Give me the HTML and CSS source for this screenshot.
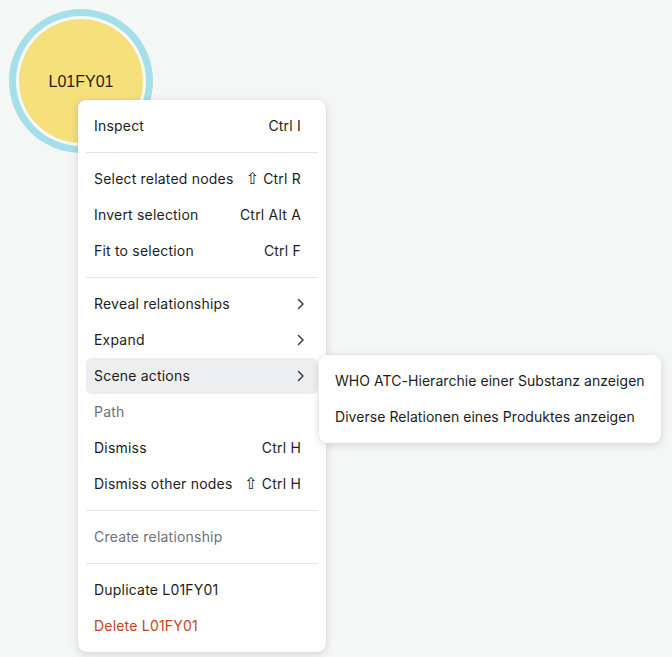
FILE: index.html
```html
<!DOCTYPE html>
<html>
<head>
<meta charset="utf-8">
<link rel="stylesheet" href="styles.css">
</head>
<body>
<div class="canvas">
  <div class="node">
    <div class="node-inner">L01FY01</div>
  </div>
  <div class="menu">
    <div class="item"><span>Inspect</span><span class="kbd">Ctrl I</span></div>
    <div class="sep"></div>
    <div class="item"><span>Select related nodes</span><span class="kbd"><span class="shift">⇧</span> Ctrl R</span></div>
    <div class="item"><span>Invert selection</span><span class="kbd">Ctrl Alt A</span></div>
    <div class="item"><span>Fit to selection</span><span class="kbd">Ctrl F</span></div>
    <div class="sep"></div>
    <div class="item"><span>Reveal relationships</span><svg class="chev" width="8" height="12" viewBox="0 0 8 12"><path d="M1.5 1.5 L6 6 L1.5 10.5" fill="none" stroke="#3a3d42" stroke-width="1.5" stroke-linecap="round" stroke-linejoin="round"/></svg></div>
    <div class="item"><span>Expand</span><svg class="chev" width="8" height="12" viewBox="0 0 8 12"><path d="M1.5 1.5 L6 6 L1.5 10.5" fill="none" stroke="#3a3d42" stroke-width="1.5" stroke-linecap="round" stroke-linejoin="round"/></svg></div>
    <div class="item active"><span>Scene actions</span><svg class="chev" width="8" height="12" viewBox="0 0 8 12"><path d="M1.5 1.5 L6 6 L1.5 10.5" fill="none" stroke="#3a3d42" stroke-width="1.5" stroke-linecap="round" stroke-linejoin="round"/></svg>
      <div class="submenu">
        <div class="subitem">WHO ATC-Hierarchie einer Substanz anzeigen</div>
        <div class="subitem">Diverse Relationen eines Produktes anzeigen</div>
      </div>
    </div>
    <div class="item disabled"><span>Path</span></div>
    <div class="item"><span>Dismiss</span><span class="kbd">Ctrl H</span></div>
    <div class="item"><span>Dismiss other nodes</span><span class="kbd"><span class="shift">⇧</span> Ctrl H</span></div>
    <div class="sep"></div>
    <div class="item disabled"><span>Create relationship</span></div>
    <div class="sep"></div>
    <div class="item"><span>Duplicate L01FY01</span></div>
    <div class="item danger"><span>Delete L01FY01</span></div>
  </div>
</div>
</body>
</html>
```
FILE: styles.css
```css
html, body {
  margin: 0;
  padding: 0;
  background: #f5f6f6;
}
body {
  width: 672px;
  height: 657px;
  overflow: hidden;
  font-family: Inter, "Noto Sans", sans-serif;
}
.canvas {
  position: relative;
  width: 672px;
  height: 657px;
}
.node {
  position: absolute;
  left: 9px;
  top: 9px;
  width: 144px;
  height: 144px;
  border-radius: 50%;
  background: #a4e0e7;
  display: flex;
  align-items: center;
  justify-content: center;
}
.node-inner {
  width: 124px;
  height: 124px;
  border-radius: 50%;
  background: #f6e07b;
  box-shadow: 0 0 0 3px #f7f9f8;
  display: flex;
  align-items: center;
  justify-content: center;
  font-family: "Liberation Sans", Arial, sans-serif;
  font-size: 16px;
  color: #1f1f1f;
  padding-top: 2px;
  box-sizing: border-box;
}
.menu {
  position: absolute;
  left: 78px;
  top: 100px;
  width: 248px;
  box-sizing: border-box;
  padding: 8px;
  background: #ffffff;
  border-radius: 8px;
  box-shadow: 0 2px 8px rgba(0, 0, 0, 0.14), 0 0 1px rgba(0, 0, 0, 0.12);
}
.item {
  position: relative;
  height: 36px;
  box-sizing: border-box;
  padding: 0 17px 1px 8px;
  display: flex;
  align-items: center;
  justify-content: space-between;
  font-size: 14px;
  color: #1c1d20;
  border-radius: 6px;
  letter-spacing: 0.2px;
}
.item.active {
  background: #edeef0;
}
.item.disabled {
  color: #6d7177;
}
.item.danger {
  color: #c2461c;
}
.kbd {
  color: #1c1d20;
}
.shift {
  font-family: "DejaVu Sans", sans-serif;
  font-size: 16px;
  line-height: 1;
}
.chev {
  margin-right: -4px;
}
.sep {
  height: 1px;
  background: #e2e3e5;
  margin: 8px 0;
}
.submenu {
  position: absolute;
  left: 233px;
  top: -3px;
  padding: 8px 0;
  background: #ffffff;
  border-radius: 8px;
  box-shadow: 0 2px 8px rgba(0, 0, 0, 0.14), 0 0 1px rgba(0, 0, 0, 0.12);
  white-space: nowrap;
}
.subitem {
  height: 36px;
  box-sizing: border-box;
  padding: 0 16px 1px 16px;
  display: flex;
  align-items: center;
  font-size: 14px;
  color: #1c1d20;
  letter-spacing: 0.05px;
}
```
